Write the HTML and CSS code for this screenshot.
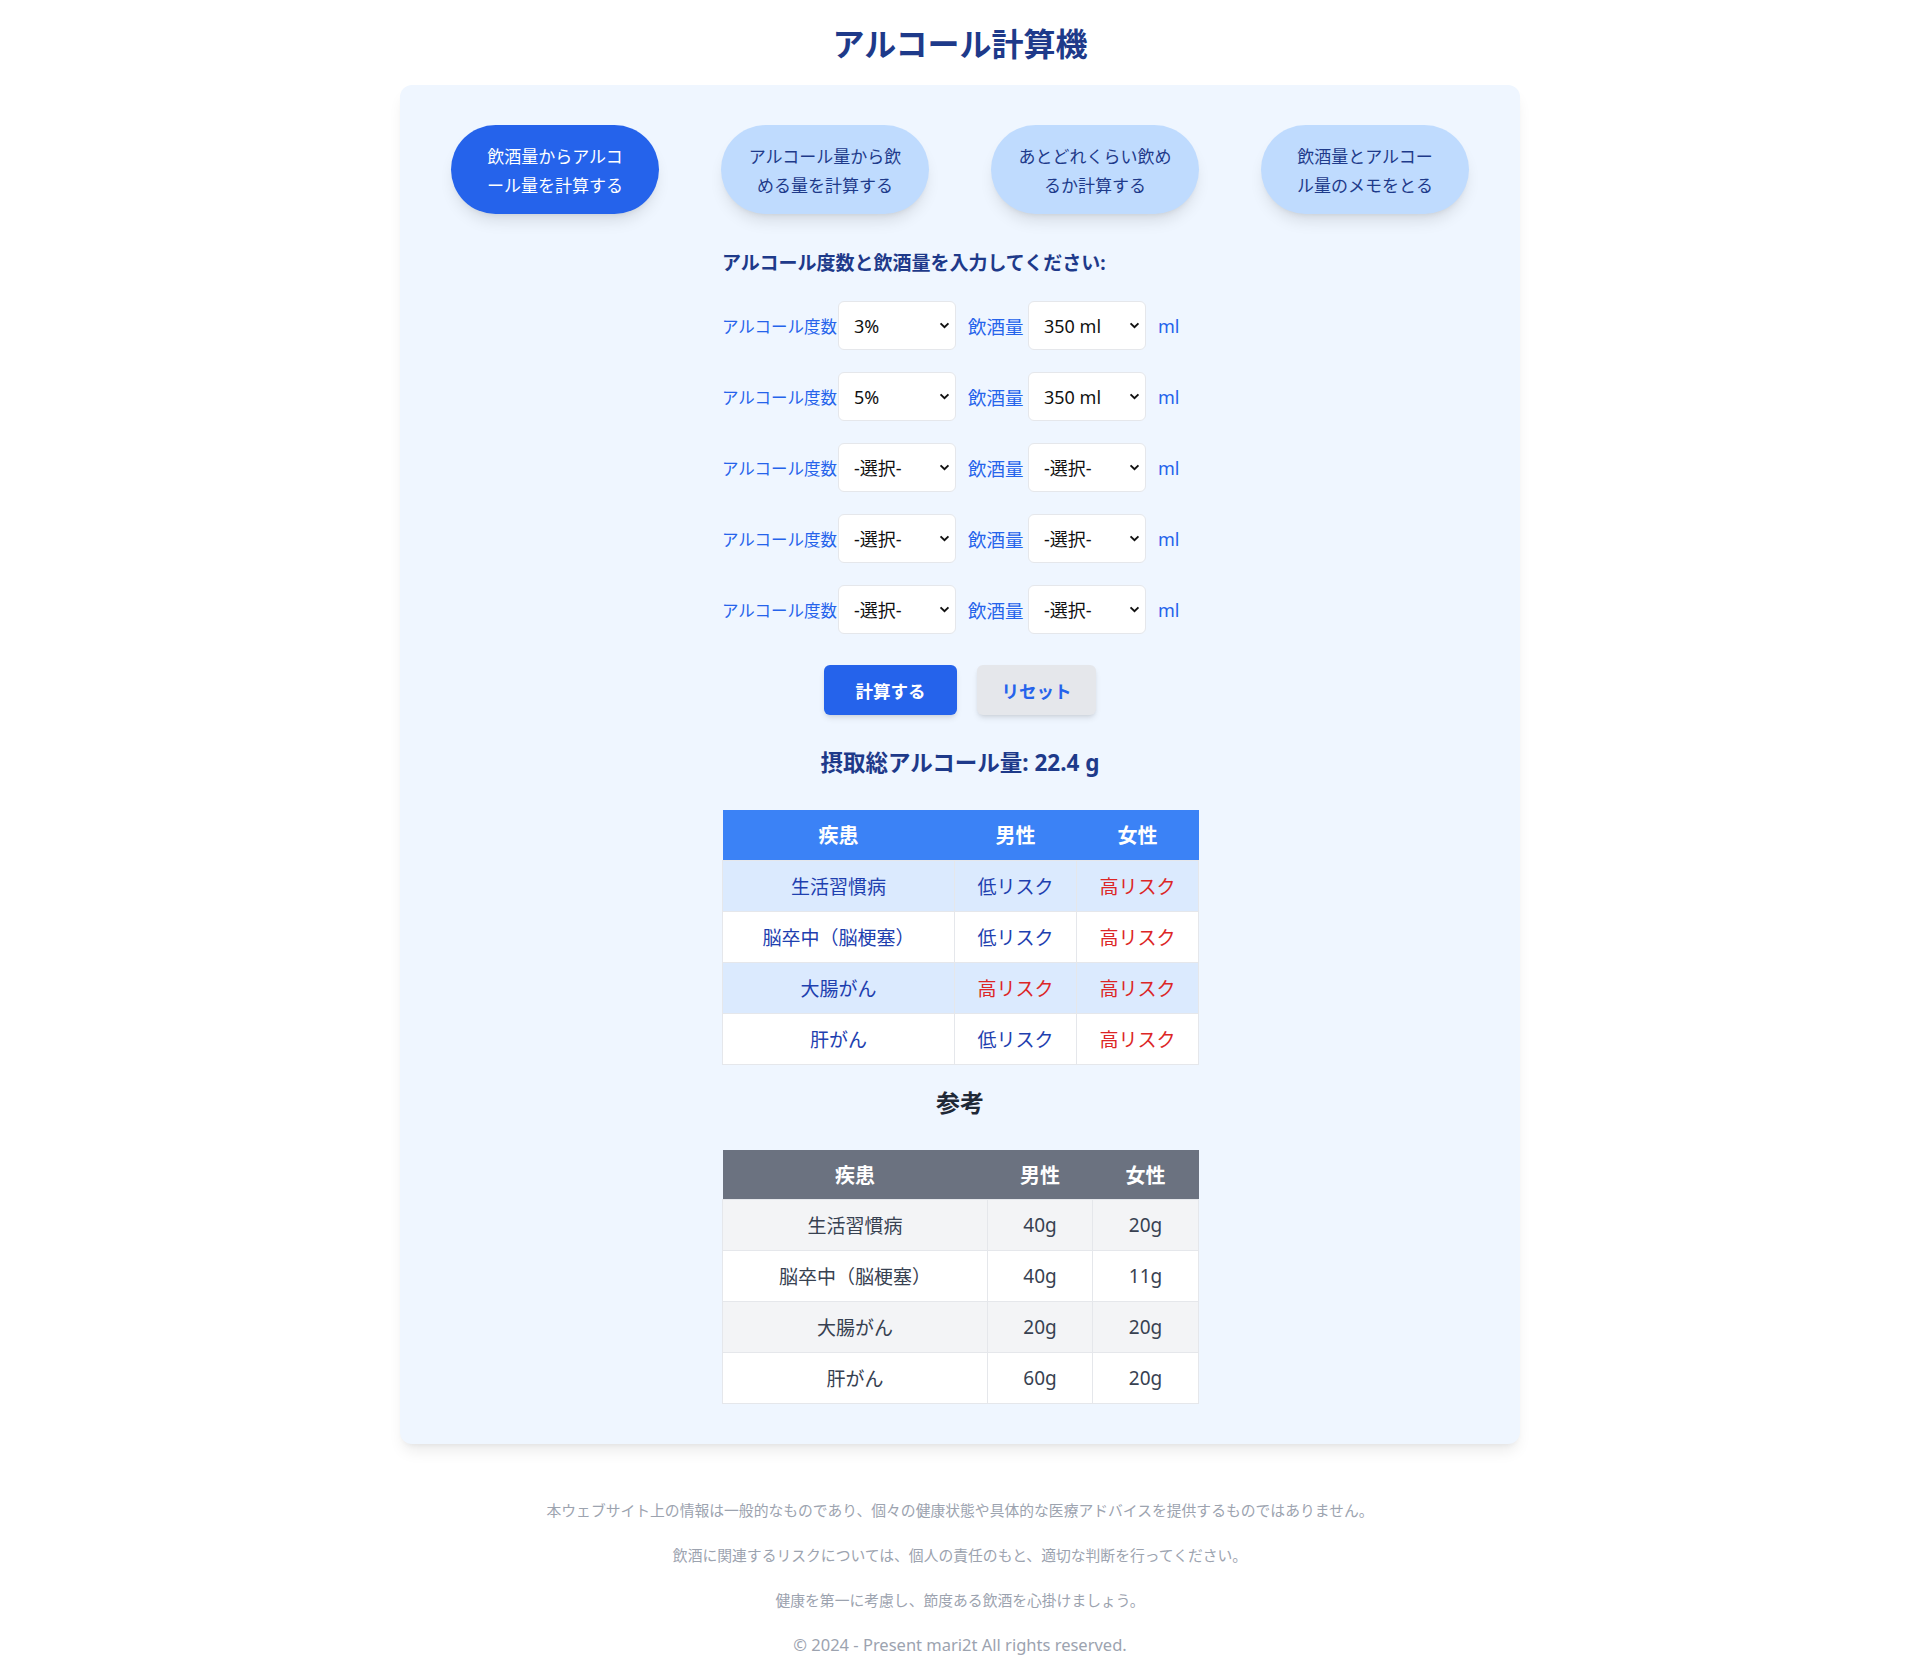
FILE: index.html
```html
<!DOCTYPE html>
<html lang="ja">
<head>
<meta charset="utf-8">
<title>アルコール計算機</title>
<link rel="stylesheet" href="styles.css">
</head>
<body>
<h1 class="title">アルコール計算機</h1>
<main class="card">
  <nav class="tabs">
    <button class="tab active">飲酒量からアルコ<br>ール量を計算する</button>
    <button class="tab">アルコール量から飲<br>める量を計算する</button>
    <button class="tab">あとどれくらい飲め<br>るか計算する</button>
    <button class="tab">飲酒量とアルコー<br>ル量のメモをとる</button>
  </nav>
  <section class="calc">
    <h2 class="form-title">アルコール度数と飲酒量を入力してください:</h2>
    <div class="row">
      <label class="lbl lbl-abv">アルコール度数</label>
      <span class="sel-wrap"><select class="sel"><option>3%</option></select><svg class="chev" viewBox="0 0 12 8" width="11" height="7"><path d="M1.5 1.5 L6 6 L10.5 1.5" fill="none" stroke="#111" stroke-width="2.2"/></svg></span>
      <label class="lbl lbl-vol">飲酒量</label>
      <span class="sel-wrap"><select class="sel"><option>350 ml</option></select><svg class="chev" viewBox="0 0 12 8" width="11" height="7"><path d="M1.5 1.5 L6 6 L10.5 1.5" fill="none" stroke="#111" stroke-width="2.2"/></svg></span>
      <span class="unit">ml</span>
    </div>
    <div class="row">
      <label class="lbl lbl-abv">アルコール度数</label>
      <span class="sel-wrap"><select class="sel"><option>5%</option></select><svg class="chev" viewBox="0 0 12 8" width="11" height="7"><path d="M1.5 1.5 L6 6 L10.5 1.5" fill="none" stroke="#111" stroke-width="2.2"/></svg></span>
      <label class="lbl lbl-vol">飲酒量</label>
      <span class="sel-wrap"><select class="sel"><option>350 ml</option></select><svg class="chev" viewBox="0 0 12 8" width="11" height="7"><path d="M1.5 1.5 L6 6 L10.5 1.5" fill="none" stroke="#111" stroke-width="2.2"/></svg></span>
      <span class="unit">ml</span>
    </div>
    <div class="row">
      <label class="lbl lbl-abv">アルコール度数</label>
      <span class="sel-wrap"><select class="sel"><option>-選択-</option></select><svg class="chev" viewBox="0 0 12 8" width="11" height="7"><path d="M1.5 1.5 L6 6 L10.5 1.5" fill="none" stroke="#111" stroke-width="2.2"/></svg></span>
      <label class="lbl lbl-vol">飲酒量</label>
      <span class="sel-wrap"><select class="sel"><option>-選択-</option></select><svg class="chev" viewBox="0 0 12 8" width="11" height="7"><path d="M1.5 1.5 L6 6 L10.5 1.5" fill="none" stroke="#111" stroke-width="2.2"/></svg></span>
      <span class="unit">ml</span>
    </div>
    <div class="row">
      <label class="lbl lbl-abv">アルコール度数</label>
      <span class="sel-wrap"><select class="sel"><option>-選択-</option></select><svg class="chev" viewBox="0 0 12 8" width="11" height="7"><path d="M1.5 1.5 L6 6 L10.5 1.5" fill="none" stroke="#111" stroke-width="2.2"/></svg></span>
      <label class="lbl lbl-vol">飲酒量</label>
      <span class="sel-wrap"><select class="sel"><option>-選択-</option></select><svg class="chev" viewBox="0 0 12 8" width="11" height="7"><path d="M1.5 1.5 L6 6 L10.5 1.5" fill="none" stroke="#111" stroke-width="2.2"/></svg></span>
      <span class="unit">ml</span>
    </div>
    <div class="row">
      <label class="lbl lbl-abv">アルコール度数</label>
      <span class="sel-wrap"><select class="sel"><option>-選択-</option></select><svg class="chev" viewBox="0 0 12 8" width="11" height="7"><path d="M1.5 1.5 L6 6 L10.5 1.5" fill="none" stroke="#111" stroke-width="2.2"/></svg></span>
      <label class="lbl lbl-vol">飲酒量</label>
      <span class="sel-wrap"><select class="sel"><option>-選択-</option></select><svg class="chev" viewBox="0 0 12 8" width="11" height="7"><path d="M1.5 1.5 L6 6 L10.5 1.5" fill="none" stroke="#111" stroke-width="2.2"/></svg></span>
      <span class="unit">ml</span>
    </div>
    <div class="actions">
      <button class="btn btn-calc">計算する</button>
      <button class="btn btn-reset">リセット</button>
    </div>
    <p class="result">摂取総アルコール量: 22.4 g</p>
    <table class="tbl tbl-risk">
      <thead>
        <tr><th class="c1">疾患</th><th class="c2">男性</th><th class="c3">女性</th></tr>
      </thead>
      <tbody>
        <tr><td>生活習慣病</td><td>低リスク</td><td class="high">高リスク</td></tr>
        <tr><td>脳卒中（脳梗塞）</td><td>低リスク</td><td class="high">高リスク</td></tr>
        <tr><td>大腸がん</td><td class="high">高リスク</td><td class="high">高リスク</td></tr>
        <tr><td>肝がん</td><td>低リスク</td><td class="high">高リスク</td></tr>
      </tbody>
    </table>
    <h3 class="ref-title">参考</h3>
    <table class="tbl tbl-ref">
      <thead>
        <tr><th class="r1">疾患</th><th class="r2">男性</th><th class="r3">女性</th></tr>
      </thead>
      <tbody>
        <tr><td>生活習慣病</td><td>40g</td><td>20g</td></tr>
        <tr><td>脳卒中（脳梗塞）</td><td>40g</td><td>11g</td></tr>
        <tr><td>大腸がん</td><td>20g</td><td>20g</td></tr>
        <tr><td>肝がん</td><td>60g</td><td>20g</td></tr>
      </tbody>
    </table>
  </section>
</main>
<footer class="footer">
  <p>本ウェブサイト上の情報は一般的なものであり、個々の健康状態や具体的な医療アドバイスを提供するものではありません。</p>
  <p>飲酒に関連するリスクについては、個人の責任のもと、適切な判断を行ってください。</p>
  <p>健康を第一に考慮し、節度ある飲酒を心掛けましょう。</p>
  <p class="copy">© 2024 - Present mari2t All rights reserved.</p>
</footer>
</body>
</html>
```
FILE: styles.css
```css
* { box-sizing: border-box; }
html, body { margin: 0; padding: 0; }
body {
  background: #ffffff;
  font-family: "Noto Sans", "Noto Sans CJK JP", sans-serif;
  color: #111827;
  padding-top: 22px;
}
.title {
  margin: 0 0 23px;
  text-align: center;
  font-family: "Noto Sans CJK JP", sans-serif;
  font-size: 32px;
  line-height: 40px;
  font-weight: 700;
  color: #1e3a8a;
}
.card {
  width: 1120px;
  margin: 0 auto;
  background: #eff6ff;
  border-radius: 12px;
  padding: 40px 40px 40px;
  box-shadow: 0 10px 15px -3px rgba(0,0,0,0.08), 0 4px 6px -4px rgba(0,0,0,0.08);
}
.tabs {
  display: grid;
  grid-template-columns: repeat(4, 1fr);
  column-gap: 40px;
  justify-items: center;
}
.tab {
  width: 208px;
  height: 89px;
  padding: 0;
  border: none;
  border-radius: 9999px;
  background: #bfdbfe;
  color: #1e3a8a;
  font-family: "Noto Sans CJK JP", sans-serif;
  font-size: 17px;
  line-height: 29px;
  white-space: nowrap;
  box-shadow: 0 10px 15px -3px rgba(0,0,0,0.1), 0 4px 6px -4px rgba(0,0,0,0.1);
}
.tab.active {
  background: #2563eb;
  color: #ffffff;
}
.calc {
  width: 476px;
  margin: 0 auto;
}
.form-title {
  margin: 35px 0 0;
  font-size: 19px;
  line-height: 28px;
  font-weight: 700;
  color: #1e3a8a;
  white-space: nowrap;
}
.row {
  display: flex;
  align-items: center;
  height: 49px;
  margin-top: 22px;
}
.form-title + .row { margin-top: 24px; }
.lbl {
  font-family: "Noto Sans CJK JP", sans-serif;
  color: #2563eb;
  white-space: nowrap;
}
.lbl-abv { width: 116px; font-size: 16.5px; }
.lbl-vol { width: 60px; margin-left: 12px; font-size: 18.5px; }
.sel-wrap {
  position: relative;
  display: block;
  width: 118px;
  height: 49px;
}
.sel {
  -webkit-appearance: none;
  appearance: none;
  width: 118px;
  height: 49px;
  padding: 0 0 0 15px;
  border: 1px solid #e5e7eb;
  border-radius: 6px;
  background: #ffffff;
  color: #111111;
  font-family: "Noto Sans", "Noto Sans CJK JP", sans-serif;
  font-size: 18px;
}
.chev {
  position: absolute;
  right: 6px;
  top: 21px;
}
.unit {
  margin-left: 12px;
  font-size: 18px;
  color: #2563eb;
}
.actions {
  display: flex;
  justify-content: center;
  gap: 20px;
  margin-top: 31px;
}
.btn {
  height: 50px;
  border: none;
  border-radius: 6px;
  font-family: "Noto Sans CJK JP", sans-serif;
  font-size: 17.5px;
  font-weight: 700;
  padding: 0;
}
.btn-calc {
  width: 133px;
  background: #2563eb;
  color: #ffffff;
  box-shadow: 0 4px 6px -1px rgba(0,0,0,0.1), 0 2px 4px -2px rgba(0,0,0,0.1);
}
.btn-reset {
  width: 119px;
  background: #e5e7eb;
  color: #2563eb;
  box-shadow: 0 4px 6px -1px rgba(0,0,0,0.1), 0 2px 4px -2px rgba(0,0,0,0.1);
}
.result {
  margin: 32px 0 0;
  text-align: center;
  font-size: 22.5px;
  line-height: 32px;
  font-weight: 700;
  color: #1e3a8a;
  white-space: nowrap;
}
.tbl {
  width: 476px;
  border-collapse: collapse;
  table-layout: fixed;
  text-align: center;
}
.tbl th {
  height: 50px;
  padding: 0;
  font-size: 20px;
  font-weight: 700;
  color: #ffffff;
}
.tbl td {
  height: 51px;
  padding: 0;
  font-size: 19px;
  border: 1px solid #e5e7eb;
  white-space: nowrap;
}
.tbl-risk { margin-top: 31px; }
.tbl-risk th { background: #3b82f6; }
.tbl-risk .c1 { width: 232px; }
.tbl-risk .c2 { width: 122px; }
.tbl-risk .c3 { width: 122px; }
.tbl-risk td { color: #1e40af; background: #ffffff; }
.tbl-risk tbody tr:nth-child(odd) td { background: #dbeafe; }
.tbl-risk td.high { color: #dc2626; }
.ref-title {
  margin: 22px 0 0;
  text-align: center;
  font-size: 24px;
  line-height: 32px;
  font-weight: 700;
  color: #1f2937;
}
.tbl-ref { margin-top: 31px; }
.tbl-ref th { background: #6b7280; }
.tbl-ref .r1 { width: 265px; }
.tbl-ref .r2 { width: 105px; }
.tbl-ref .r3 { width: 106px; }
.tbl-ref td { color: #374151; background: #ffffff; }
.tbl-ref tbody tr:nth-child(odd) td { background: #f3f4f6; }
.footer {
  margin-top: 54px;
  text-align: center;
  color: #9ca3af;
  font-size: 14.8px;
  line-height: 24px;
}
.footer p {
  margin: 0 0 21px;
}
.footer .copy {
  font-size: 16.5px;
}
```
